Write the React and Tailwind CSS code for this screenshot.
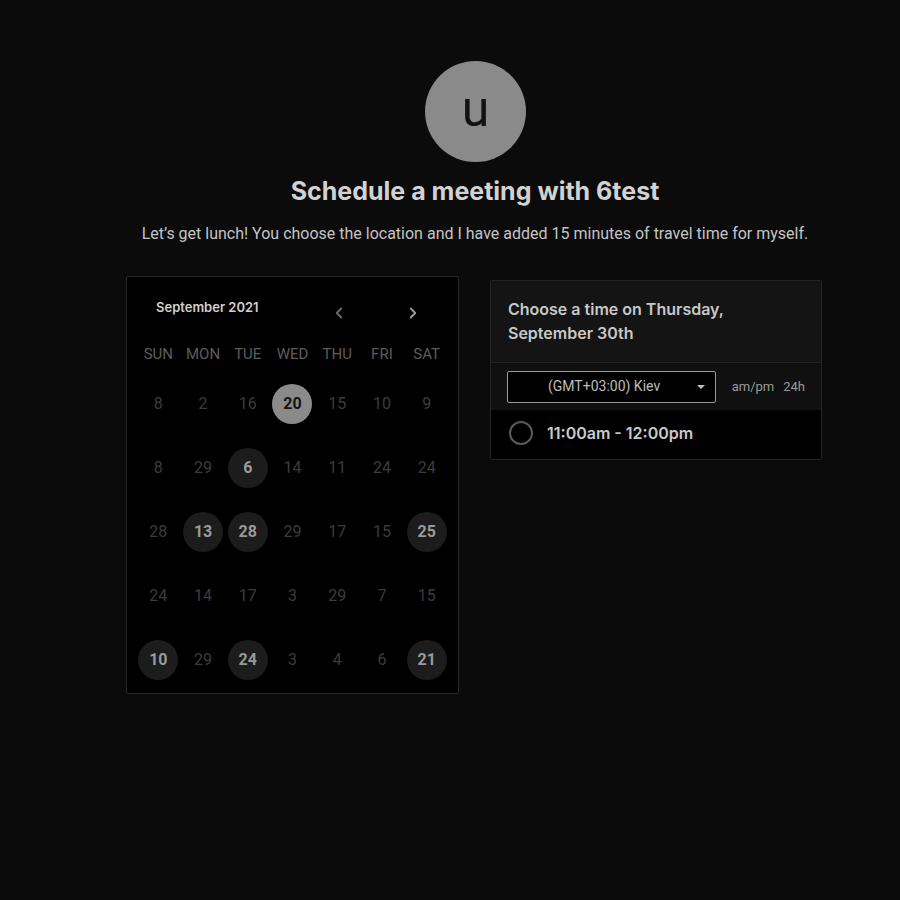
import React from 'react';
import { ChevronLeft, ChevronRight } from 'lucide-react';

const WEEKDAYS = ['SUN', 'MON', 'TUE', 'WED', 'THU', 'FRI', 'SAT'];

// 0 = unavailable, 1 = available, 2 = selected
const ROWS = [
  [[8, 0], [2, 0], [16, 0], [20, 2], [15, 0], [10, 0], [9, 0]],
  [[8, 0], [29, 0], [6, 1], [14, 0], [11, 0], [24, 0], [24, 0]],
  [[28, 0], [13, 1], [28, 1], [29, 0], [17, 0], [15, 0], [25, 1]],
  [[24, 0], [14, 0], [17, 0], [3, 0], [29, 0], [7, 0], [15, 0]],
  [[10, 1], [29, 0], [24, 1], [3, 0], [4, 0], [6, 0], [21, 1]],
];

function Day({ value, state }) {
  if (state === 2) {
    return (
      <div className="w-10 h-10 rounded-full bg-[#8a8a8a] text-[#141414] font-bold text-[16px] flex items-center justify-center">
        {value}
      </div>
    );
  }
  if (state === 1) {
    return (
      <div className="w-10 h-10 rounded-full bg-[#1c1c1c] text-[#9a9a9a] font-bold text-[16px] flex items-center justify-center">
        {value}
      </div>
    );
  }
  return (
    <div className="w-10 h-10 text-[#3c3c3c] text-[16px] flex items-center justify-center">{value}</div>
  );
}

export default function App() {
  return (
    <div className="min-h-[900px] bg-[#0b0b0b] pl-[48px] pt-[61px]" style={{ fontFamily: 'Roboto, sans-serif' }}>
      <div className="flex flex-col items-center">
        {/* Avatar */}
        <div className="ml-[3px] w-[101px] h-[101px] rounded-full bg-[#8a8a8a] flex items-center justify-center">
          <span className="text-[#121212] text-[50px] leading-none -mt-[6px]">u</span>
        </div>

        <h1
          className="mt-[12px] ml-[2px] text-[25px] leading-[34px] font-bold text-[#d2d2d2]"
          style={{ fontFamily: 'Inter, sans-serif' }}
        >
          Schedule a meeting with 6test
        </h1>
        <p className="mt-[15px] ml-[2px] text-[16px] leading-[22px] text-[#c4c4c4]">
          Let’s get lunch! You choose the location and I have added 15 minutes of travel time for myself.
        </p>

        <div className="mt-[31px] flex items-start gap-[31px]">
          {/* Calendar */}
          <div className="w-[333px] h-[418px] bg-black border border-[#262626] rounded-[2px] px-[9px] pt-[20px]">
            <div className="flex items-center h-[22px]">
              <span
                className="ml-[20px] text-[13px] font-semibold text-[#cfcfcf]"
                style={{ fontFamily: 'Inter, sans-serif' }}
              >
                September 2021
              </span>
              <ChevronLeft className="ml-[71px] mt-[10px] w-[18px] h-[18px] text-[#6a6a6a]" strokeWidth={2.5} />
              <ChevronRight className="ml-[56px] mt-[10px] w-[18px] h-[18px] text-[#9a9a9a]" strokeWidth={2.5} />
            </div>
            <div className="grid grid-cols-7 mt-[25px]">
              {WEEKDAYS.map((d) => (
                <div key={d} className="text-center text-[15px] leading-[20px] text-[#5c5c5c]">
                  {d}
                </div>
              ))}
            </div>
            <div className="mt-[20px] flex flex-col gap-[24px]">
              {ROWS.map((row, i) => (
                <div key={i} className="grid grid-cols-7">
                  {row.map(([v, s], j) => (
                    <div key={j} className="flex justify-center">
                      <Day value={v} state={s} />
                    </div>
                  ))}
                </div>
              ))}
            </div>
          </div>

          {/* Time slots */}
          <div className="mt-[4px] w-[332px] border border-[#232323] rounded-[2px] overflow-hidden">
            <div
              className="bg-[#141414] px-[17px] pt-[16px] pb-[17px] text-[16px] leading-[24px] font-semibold text-[#c8c8c8] border-b border-[#242424]"
              style={{ fontFamily: 'Inter, sans-serif' }}
            >
              Choose a time on Thursday,
              <br />
              September 30th
            </div>
            <div className="bg-[#101010] h-[47px] px-[16px] flex items-center">
              <div className="w-[212px] h-[32px] bg-black border border-[#9a9a9a] rounded-[2px] flex items-center pl-[40px] pr-[10px]">
                <span className="flex-1 text-[14px] text-[#bcbcbc]">(GMT+03:00) Kiev</span>
                <span className="w-0 h-0 border-l-[4px] border-r-[4px] border-t-[4px] border-l-transparent border-r-transparent border-t-[#bcbcbc]" />
              </div>
              <span className="ml-[16px] text-[13px] text-[#9a9a9a]">am/pm</span>
              <span className="ml-[9px] text-[13px] text-[#9a9a9a]">24h</span>
            </div>
            <div className="bg-black h-[49px] px-[18px] pb-[4px] flex items-center">
              <span className="w-[24px] h-[24px] rounded-full border-2 border-[#5a5a5a]" />
              <span
                className="ml-[14px] text-[16px] font-semibold text-[#cacaca]"
                style={{ fontFamily: 'Inter, sans-serif' }}
              >
                11:00am - 12:00pm
              </span>
            </div>
          </div>
        </div>
      </div>
    </div>
  );
}
